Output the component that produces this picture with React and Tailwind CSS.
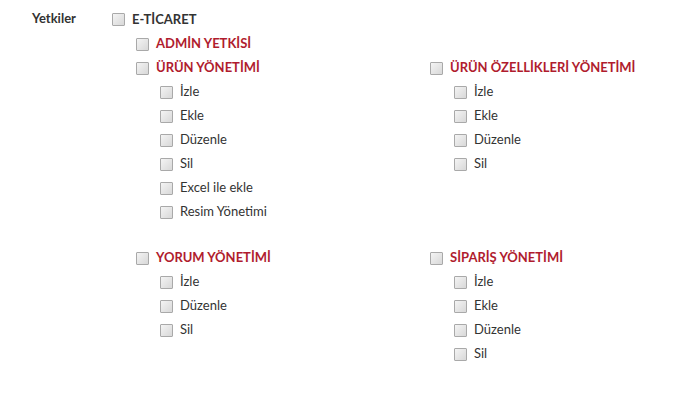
const Kutu = () => (
  <span className="inline-block w-[13px] h-[13px] shrink-0 border border-[#a9a9a9] rounded-[1px] bg-gradient-to-br from-[#f4f4f4] to-[#d8d8d8] mr-[7px]" />
);

const Satir = ({ children, baslik }) => (
  <label className="flex items-center h-6 cursor-pointer">
    <Kutu />
    <span
      className={
        baslik
          ? "text-[13px] font-bold text-[#b01c2e] uppercase"
          : "text-[13px] text-[#333]"
      }
    >
      {children}
    </span>
  </label>
);

const gruplar = [
  { ad: "ÜRÜN YÖNETİMİ", izinler: ["İzle", "Ekle", "Düzenle", "Sil", "Excel ile ekle", "Resim Yönetimi"] },
  { ad: "ÜRÜN ÖZELLİKLERİ YÖNETİMİ", izinler: ["İzle", "Ekle", "Düzenle", "Sil"] },
  { ad: "YORUM YÖNETİMİ", izinler: ["İzle", "Düzenle", "Sil"] },
  { ad: "SİPARİŞ YÖNETİMİ", izinler: ["İzle", "Ekle", "Düzenle", "Sil"] },
];

const App = () => {
  return (
    <div className="w-[693px] h-[409px] bg-white pt-[7px] pl-[32px] font-['Lato',sans-serif]">
      <div className="flex">
        {/* Etiket */}
        <div className="w-[80px] h-6 flex items-center text-[13px] font-bold text-[#333]">Yetkiler</div>

        {/* Yetki ağacı */}
        <div>
          <label className="flex items-center h-[25px]">
            <Kutu />
            <span className="text-[13px] font-bold text-[#333]">E-TİCARET</span>
          </label>
          <div className="pl-6">
            <Satir baslik>ADMİN YETKİSİ</Satir>
            <div className="grid grid-cols-[294px_260px] gap-y-[22px]">
              {gruplar.map((g) => (
                <div key={g.ad}>
                  <Satir baslik>{g.ad}</Satir>
                  <div className="pl-6">
                    {g.izinler.map((i) => (
                      <Satir key={i}>{i}</Satir>
                    ))}
                  </div>
                </div>
              ))}
            </div>
          </div>
        </div>
      </div>
    </div>
  );
};

export default App;
